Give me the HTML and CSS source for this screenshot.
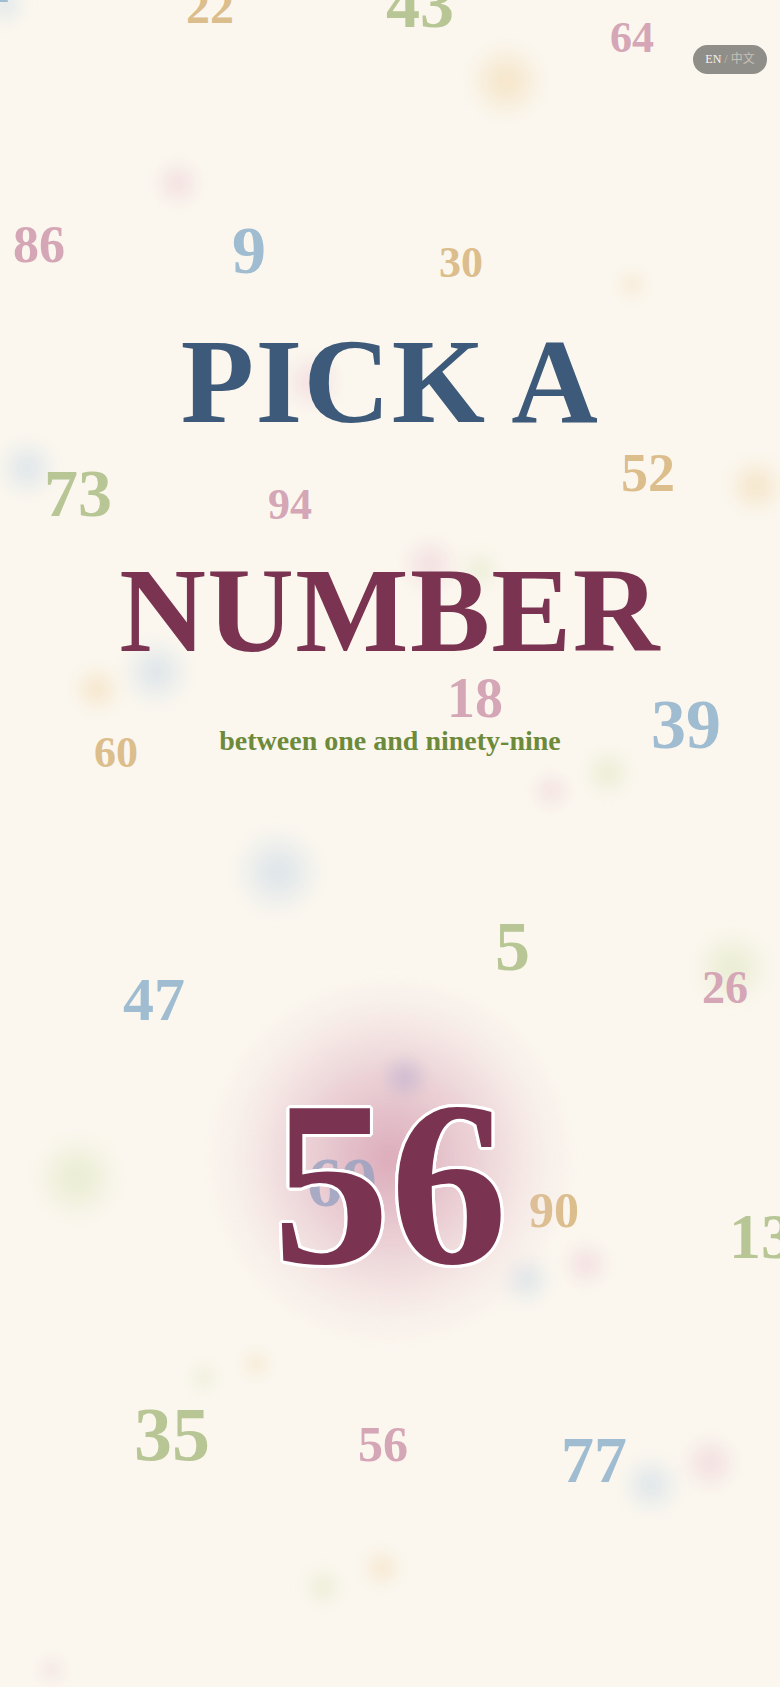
FILE: index.html
```html
<!DOCTYPE html>
<html lang="en">
<head>
<meta charset="utf-8">
<title>Pick a Number</title>
<link rel="stylesheet" href="styles.css">
</head>
<body>
<div class="page">
  <div class="canvas" aria-hidden="true">
    <span class="blob b-tan" style="left:466px;top:41px;width:80px;height:80px"></span>
    <span class="blob b-pink" style="left:153px;top:158px;width:50px;height:50px"></span>
    <span class="blob b-tan" style="left:617px;top:270px;width:30px;height:30px"></span>
    <span class="blob b-blue" style="left:-3px;top:438px;width:60px;height:60px"></span>
    <span class="blob b-tan" style="left:726px;top:456px;width:60px;height:60px"></span>
    <span class="blob b-pink" style="left:282px;top:352px;width:60px;height:60px"></span>
    <span class="blob b-pink" style="left:400px;top:535px;width:60px;height:60px"></span>
    <span class="blob b-green" style="left:460px;top:550px;width:40px;height:40px"></span>
    <span class="blob b-blue" style="left:121px;top:637px;width:70px;height:70px"></span>
    <span class="blob b-tan" style="left:72px;top:664px;width:50px;height:50px"></span>
    <span class="blob b-pink" style="left:531px;top:771px;width:40px;height:40px"></span>
    <span class="blob b-green" style="left:583px;top:748px;width:50px;height:50px"></span>
    <span class="blob b-blue" style="left:233px;top:827px;width:90px;height:90px"></span>
    <span class="blob b-green" style="left:692px;top:928px;width:80px;height:80px"></span>
    <span class="blob b-green" style="left:32px;top:1133px;width:90px;height:90px"></span>
    <span class="blob b-blue" style="left:502px;top:1255px;width:50px;height:50px"></span>
    <span class="blob b-pink" style="left:561px;top:1239px;width:50px;height:50px"></span>
    <span class="blob b-green" style="left:189px;top:1363px;width:30px;height:30px"></span>
    <span class="blob b-tan" style="left:241px;top:1349px;width:30px;height:30px"></span>
    <span class="blob b-blue" style="left:621px;top:1455px;width:60px;height:60px"></span>
    <span class="blob b-pink" style="left:680px;top:1433px;width:60px;height:60px"></span>
    <span class="blob b-green" style="left:303px;top:1567px;width:40px;height:40px"></span>
    <span class="blob b-tan" style="left:362px;top:1548px;width:40px;height:40px"></span>
    <span class="blob b-pink" style="left:37px;top:1655px;width:30px;height:30px"></span>
    <span class="blob b-blue" style="left:-15px;top:-15px;width:40px;height:40px"></span>

    <span class="num c-blue" style="left:-12px;top:-34px;font-size:44px">1</span>
    <span class="num c-tan" style="left:186px;top:-17px;font-size:48px">22</span>
    <span class="num c-green" style="left:386px;top:-30px;font-size:68px">43</span>
    <span class="num c-pink" style="left:610px;top:16px;font-size:44px">64</span>
    <span class="num c-pink" style="left:13px;top:219px;font-size:52px">86</span>
    <span class="num c-blue" style="left:232px;top:216px;font-size:68px">9</span>
    <span class="num c-tan" style="left:439px;top:241px;font-size:44px">30</span>
    <span class="num c-green" style="left:44px;top:459px;font-size:68px">73</span>
    <span class="num c-pink" style="left:268px;top:483px;font-size:44px">94</span>
    <span class="num c-tan" style="left:621px;top:446px;font-size:54px">52</span>
    <span class="num c-pink" style="left:447px;top:670px;font-size:56px">18</span>
    <span class="num c-blue" style="left:651px;top:690px;font-size:70px">39</span>
    <span class="num c-tan" style="left:94px;top:731px;font-size:44px">60</span>
    <span class="num c-green" style="left:495px;top:912px;font-size:70px">5</span>
    <span class="num c-blue" style="left:123px;top:968px;font-size:62px">47</span>
    <span class="num c-pink" style="left:702px;top:965px;font-size:46px">26</span>
    <span class="num c-tan" style="left:529px;top:1185px;font-size:50px">90</span>
    <span class="num c-green" style="left:729px;top:1205px;font-size:64px">13</span>
    <span class="num c-green" style="left:134px;top:1396px;font-size:76px">35</span>
    <span class="num c-pink" style="left:358px;top:1419px;font-size:50px">56</span>
    <span class="num c-blue" style="left:561px;top:1427px;font-size:66px">77</span>
  </div>

  <button class="lang" type="button"><span class="lang-on">EN</span> <span class="lang-off">/ 中文</span></button>

  <main class="hero">
    <h1 class="title"><span class="t1">PICK A</span> <span class="t2">NUMBER</span></h1>
    <p class="sub">between one and ninety-nine</p>
    <div class="pick">
      <span class="glow"></span>
      <span class="glow-dot"></span>
      <span class="ghost">69</span>
      <span class="big">56</span>
    </div>
  </main>
</div>
</body>
</html>
```
FILE: styles.css
```css
* { box-sizing: border-box; }

html, body {
  margin: 0;
  padding: 0;
  background: #fbf7ef;
}

body {
  font-family: "Liberation Serif", "Times New Roman", serif;
  overflow: hidden;
}

.page {
  position: relative;
  width: 780px;
  height: 1687px;
  overflow: hidden;
  background: #fbf7ef;
}

.canvas {
  position: absolute;
  inset: 0;
  pointer-events: none;
}

.blob {
  position: absolute;
  border-radius: 50%;
  filter: blur(8px);
}
.b-tan   { background: radial-gradient(circle, rgba(240, 210, 160, 0.55) 0%, rgba(240, 210, 160, 0) 70%); }
.b-pink  { background: radial-gradient(circle, rgba(232, 190, 205, 0.5) 0%, rgba(232, 190, 205, 0) 70%); }
.b-blue  { background: radial-gradient(circle, rgba(190, 210, 228, 0.55) 0%, rgba(190, 210, 228, 0) 70%); }
.b-green { background: radial-gradient(circle, rgba(215, 225, 180, 0.55) 0%, rgba(215, 225, 180, 0) 70%); }

.num {
  position: absolute;
  font-weight: 700;
  line-height: 1;
  white-space: nowrap;
}
.c-pink  { color: #d4a6b6; }
.c-blue  { color: #9fbcd0; }
.c-tan   { color: #dcbe8c; }
.c-green { color: #b7c694; }

.lang {
  position: absolute;
  left: 693px;
  top: 45px;
  width: 74px;
  height: 29px;
  border: 0;
  border-radius: 15px;
  background: #908e89;
  font-family: "Liberation Serif", "Noto Sans CJK SC", serif;
  font-size: 12px;
  line-height: 29px;
  padding: 0;
  text-align: center;
  color: #f4f1ea;
  z-index: 3;
}
.lang-on { color: #f7f4ee; }
.lang-off { color: #c4c1ba; }

.hero {
  position: relative;
  z-index: 2;
  width: 780px;
  padding-top: 267px;
  text-align: center;
}

.title {
  margin: 0;
  font-size: 120px;
  line-height: 229px;
  font-weight: 700;
  letter-spacing: 1.4px;
}
.t1 { display: block; color: #3d5a7a; }
.t2 { display: block; color: #7a3350; }

.sub {
  margin: 0;
  font-size: 28px;
  line-height: 32px;
  font-weight: 700;
  color: #6d8a3b;
}

.pick {
  position: relative;
  margin: 310px auto 0;
  width: 300px;
  height: 235px;
}

.glow {
  position: absolute;
  left: -40px;
  top: -85px;
  width: 380px;
  height: 370px;
  border-radius: 50%;
  background: radial-gradient(ellipse at 50% 48%, rgba(205, 135, 162, 0.68) 0%, rgba(212, 155, 178, 0.45) 28%, rgba(232, 195, 206, 0.2) 54%, rgba(250, 240, 235, 0) 70%);
  filter: blur(8px);
}

.glow-dot {
  position: absolute;
  left: 140px;
  top: -15px;
  width: 50px;
  height: 50px;
  border-radius: 50%;
  background: radial-gradient(circle, rgba(175, 165, 205, 0.5) 0%, rgba(175, 165, 205, 0) 70%);
  filter: blur(4px);
}

.ghost {
  position: absolute;
  left: 67px;
  top: 81px;
  font-size: 70px;
  line-height: 1;
  font-weight: 700;
  color: rgba(150, 160, 192, 0.78);
}

.big {
  position: relative;
  display: block;
  font-size: 235px;
  line-height: 235px;
  font-weight: 700;
  color: #7a3350;
  text-shadow:
    3px 0 0 #fff, -3px 0 0 #fff, 0 3px 0 #fff, 0 -3px 0 #fff,
    2px 2px 0 #fff, -2px 2px 0 #fff, 2px -2px 0 #fff, -2px -2px 0 #fff,
    3px 1px 0 #fff, -3px 1px 0 #fff, 3px -1px 0 #fff, -3px -1px 0 #fff,
    1px 3px 0 #fff, -1px 3px 0 #fff, 1px -3px 0 #fff, -1px -3px 0 #fff;
}
```
